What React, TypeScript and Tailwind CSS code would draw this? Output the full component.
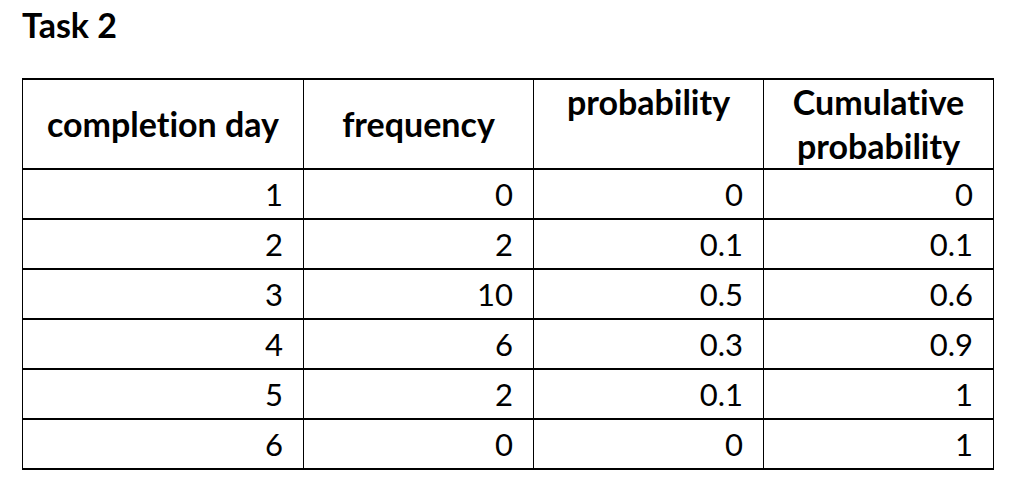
import React from 'react';

const rows = [
  ['1', '0', '0', '0'],
  ['2', '2', '0.1', '0.1'],
  ['3', '10', '0.5', '0.6'],
  ['4', '6', '0.3', '0.9'],
  ['5', '2', '0.1', '1'],
  ['6', '0', '0', '1'],
];

export default function App() {
  return (
    <div className="w-[1010px] h-[481px] bg-white text-black font-['Lato','Carlito',sans-serif] [font-variant-ligatures:none]">
      <h1 className="pl-[22px] pt-[5px] h-[78px] text-[34px] font-bold leading-[40px]">Task 2</h1>
      <table className="ml-[22px] border-collapse table-fixed w-[971px]">
        <colgroup>
          <col className="w-[281px]" />
          <col className="w-[230px]" />
          <col className="w-[230px]" />
          <col className="w-[230px]" />
        </colgroup>
        <thead>
          <tr className="h-[90px]">
            <th className="p-0 border-x border-black border-y-2 text-[34px] font-bold text-center align-middle leading-[46px]">
              completion day
            </th>
            <th className="p-0 border-x border-black border-y-2 text-[34px] font-bold text-center align-middle leading-[46px]">
              frequency
            </th>
            <th className="p-0 border-x border-black border-y-2 text-[34px] font-bold text-center align-top leading-[44px]">
              probability
            </th>
            <th className="p-0 border-x border-black border-y-2 text-[34px] font-bold text-center align-top leading-[44px]">
              Cumulative<br />probability
            </th>
          </tr>
        </thead>
        <tbody>
          {rows.map((r, i) => (
            <tr key={i} className="h-[50px]">
              {r.map((v, j) => (
                <td
                  key={j}
                  className="p-0 border-x border-black border-y-2 text-right pr-[20px] text-[31px] leading-[40px] align-middle"
                >
                  {v}
                </td>
              ))}
            </tr>
          ))}
        </tbody>
      </table>
    </div>
  );
}
